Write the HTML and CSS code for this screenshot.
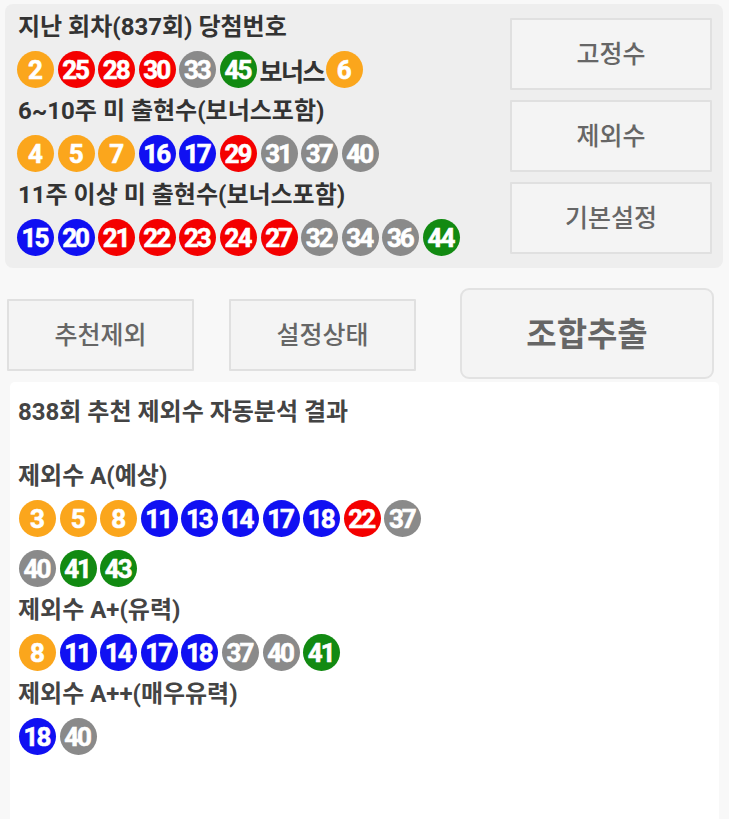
FILE: index.html
```html
<!DOCTYPE html>
<html lang="ko">
<head>
<meta charset="utf-8">
<title>제외수 자동분석</title>
<link rel="stylesheet" href="styles.css">
</head>
<body>
<section class="top-panel">
  <div class="draws">
    <div class="title">지난 회차(837회) 당첨번호</div>
    <div class="balls">
      <span class="ball y">2</span><span class="ball r">25</span><span class="ball r">28</span><span class="ball r">30</span><span class="ball g">33</span><span class="ball gr">45</span><span class="bonus">보너스</span><span class="ball y">6</span>
    </div>
    <div class="title">6~10주 미 출현수(보너스포함)</div>
    <div class="balls">
      <span class="ball y">4</span><span class="ball y">5</span><span class="ball y">7</span><span class="ball b">16</span><span class="ball b">17</span><span class="ball r">29</span><span class="ball g">31</span><span class="ball g">37</span><span class="ball g">40</span>
    </div>
    <div class="title">11주 이상 미 출현수(보너스포함)</div>
    <div class="balls">
      <span class="ball b">15</span><span class="ball b">20</span><span class="ball r">21</span><span class="ball r">22</span><span class="ball r">23</span><span class="ball r">24</span><span class="ball r">27</span><span class="ball g">32</span><span class="ball g">34</span><span class="ball g">36</span><span class="ball gr">44</span>
    </div>
  </div>
  <div class="side-buttons">
    <button class="flat-btn">고정수</button>
    <button class="flat-btn">제외수</button>
    <button class="flat-btn">기본설정</button>
  </div>
</section>

<section class="action-row">
  <button class="flat-btn act first">추천제외</button>
  <button class="flat-btn act second">설정상태</button>
  <button class="big-btn">조합추출</button>
</section>

<section class="result">
  <div class="rtitle head">838회 추천 제외수 자동분석 결과</div>
  <div class="rtitle">제외수 A(예상)</div>
  <div class="balls wrap">
    <span class="ball y">3</span><span class="ball y">5</span><span class="ball y">8</span><span class="ball b">11</span><span class="ball b">13</span><span class="ball b">14</span><span class="ball b">17</span><span class="ball b">18</span><span class="ball r">22</span><span class="ball g">37</span><span class="ball g">40</span><span class="ball gr">41</span><span class="ball gr">43</span>
  </div>
  <div class="rtitle">제외수 A+(유력)</div>
  <div class="balls wrap">
    <span class="ball y">8</span><span class="ball b">11</span><span class="ball b">14</span><span class="ball b">17</span><span class="ball b">18</span><span class="ball g">37</span><span class="ball g">40</span><span class="ball gr">41</span>
  </div>
  <div class="rtitle">제외수 A++(매우유력)</div>
  <div class="balls wrap">
    <span class="ball b">18</span><span class="ball g">40</span>
  </div>
</section>
</body>
</html>
```

FILE: styles.css
```css
* { box-sizing: border-box; }

html, body {
  margin: 0;
  padding: 0;
  background: #f8f8f8;
  font-family: "Roboto", "Noto Sans CJK KR", sans-serif;
  height: 819px;
  overflow: hidden;
}

.top-panel {
  margin: 4px 6px 0 5px;
  height: 264px;
  background: #eeeeee;
  border-radius: 8px;
  padding: 3px 11px 0 12px;
  display: flex;
  justify-content: space-between;
}

.title {
  height: 40px;
  line-height: 40px;
  font-size: 24px;
  font-weight: 700;
  color: #333;
  padding-left: 1px;
  white-space: nowrap;
}

.balls {
  display: flex;
  align-items: center;
  padding: 4px 0 3px;
  column-gap: 3.6px;
}

.balls.wrap {
  flex-wrap: wrap;
  row-gap: 13px;
  width: 410px;
}

.ball {
  width: 37px;
  height: 37px;
  border-radius: 50%;
  flex: none;
  display: flex;
  align-items: center;
  justify-content: center;
  color: #fff;
  font-family: "Roboto", sans-serif;
  font-weight: 700;
  font-size: 26px;
  line-height: 1;
  letter-spacing: -2px;
  padding-right: 2px;
  -webkit-text-stroke: 0.6px #fff;
}

.ball.y { background: #fba61c; }
.ball.r { background: #f40000; }
.ball.b { background: #1010f2; }
.ball.g { background: #8a8a8a; }
.ball.gr { background: #128a12; }

.bonus {
  font-size: 25px;
  font-weight: 700;
  color: #333;
  margin: 0 -2px 0 -1px;
  letter-spacing: -1.5px;
}

.side-buttons {
  width: 202px;
  padding-top: 11px;
  display: flex;
  flex-direction: column;
  gap: 10px;
}

.flat-btn {
  height: 72px;
  background: #f4f4f4;
  border: 2px solid #e0e0e0;
  border-radius: 1px;
  font-family: "Roboto", "Noto Sans CJK KR", sans-serif;
  font-size: 25px;
  font-weight: 500;
  color: #666;
  padding: 0 0 4px;
}

.action-row {
  margin-top: 20px;
  height: 91px;
  display: flex;
  align-items: center;
  padding-left: 7px;
}

.flat-btn.act {
  width: 187px;
  margin-top: 2px;
}

.flat-btn.second { margin-left: 35px; }

.big-btn {
  margin-left: 44px;
  width: 254px;
  height: 91px;
  background: #f4f4f4;
  border: 2px solid #e2e2e2;
  border-radius: 9px;
  font-family: "Roboto", "Noto Sans CJK KR", sans-serif;
  font-size: 33px;
  font-weight: 700;
  color: #666;
  padding: 0 0 4px;
}

.result {
  margin: 3px 10px 0 10px;
  height: 460px;
  background: #ffffff;
  border-radius: 5px 5px 0 0;
  padding: 10px 0 0 8px;
}

.rtitle {
  height: 40px;
  line-height: 40px;
  font-size: 24px;
  font-weight: 700;
  color: #444;
  white-space: nowrap;
}

.rtitle.head { margin-bottom: 24px; }

.result .balls { padding-left: 1px; }
```
